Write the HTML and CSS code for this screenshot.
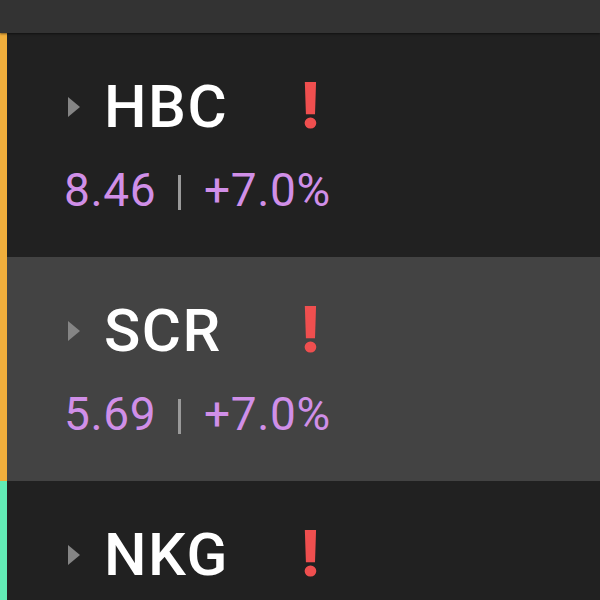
FILE: index.html
```html
<!DOCTYPE html>
<html>
<head>
<meta charset="utf-8">
<link rel="stylesheet" href="styles.css">
</head>
<body>
<div class="topbar"></div>
<div class="list">
  <div class="row row-dark warn">
    <div class="head">
      <span class="caret"></span>
      <span class="ticker">HBC</span>
      <span class="alert">!</span>
    </div>
    <div class="price"><span>8.46</span><span class="sep"></span><span>+7.0%</span></div>
  </div>
  <div class="row row-light warn">
    <div class="head">
      <span class="caret"></span>
      <span class="ticker">SCR</span>
      <span class="alert">!</span>
    </div>
    <div class="price"><span>5.69</span><span class="sep"></span><span>+7.0%</span></div>
  </div>
  <div class="row row-dark ok">
    <div class="head">
      <span class="caret"></span>
      <span class="ticker">NKG</span>
      <span class="alert">!</span>
    </div>
  </div>
</div>
</body>
</html>
```
FILE: styles.css
```css
html, body {
  margin: 0;
  padding: 0;
  background: #212121;
  font-family: Roboto, "Noto Sans", sans-serif;
  overflow: hidden;
  height: 600px;
}
.topbar {
  height: 33px;
  background: #333333;
  box-shadow: 0 1px 2px rgba(0,0,0,0.5);
  position: relative;
  z-index: 1;
}
.row {
  border-left: 7px solid #f0ae3c;
  padding: 46px 0 44px 61px;
  height: 134px;
}
.row.ok { border-left-color: #62ecb6; }
.row-dark { background: #212121; }
.row-light { background: #434343; }
.head {
  display: flex;
  align-items: center;
  height: 58px;
}
.caret {
  width: 0;
  height: 0;
  border-top: 10px solid transparent;
  border-bottom: 10px solid transparent;
  border-left: 12px solid #858585;
  margin-right: 24px;
  margin-top: -2px;
}
.ticker {
  color: #ffffff;
  font-size: 60px;
  font-weight: 500;
  letter-spacing: 1.5px;
  line-height: 1;
  width: 198px;
  margin-top: -2px;
}
.alert {
  color: #ef4f4f;
  -webkit-text-stroke: 2px #ef4f4f;
  font-size: 61px;
  font-weight: 700;
  line-height: 1;
  margin-top: -3px;
}
.price {
  margin-top: 30px;
  display: flex;
  align-items: center;
  color: #d08fe8;
  font-size: 46px;
  letter-spacing: 0.6px;
  line-height: 1;
  height: 46px;
  margin-left: -4px;
}
.sep {
  display: inline-block;
  width: 3px;
  height: 35px;
  background: #9a9a9a;
  margin: 4px 23px 0 22px;
}
```
